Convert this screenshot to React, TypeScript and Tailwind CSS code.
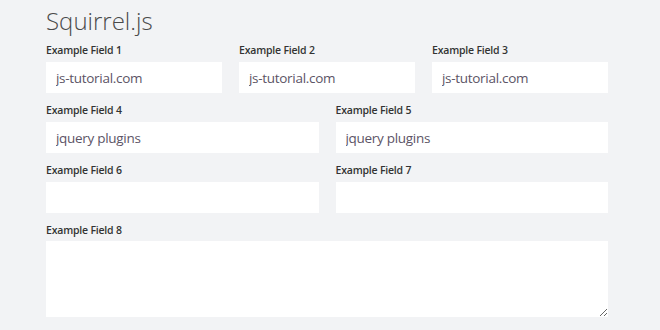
import React from "react";

const font = { fontFamily: '"Open Sans", "Liberation Sans", sans-serif' };

function Field({ label, value }: { label: string; value?: string }) {
  return (
    <div className="flex flex-col min-w-0">
      <label className="block text-[10.5px] tracking-[-0.2px] leading-[16px] font-semibold text-[#333] mb-[4px]">{label}</label>
      <div className="h-[31px] w-full bg-white pl-[10px] pr-[10px] flex items-center">
        <input
          readOnly
          defaultValue={value ?? ""}
          className="w-full h-full bg-transparent border-0 outline-none text-[13.5px] tracking-[-0.3px] font-normal text-[#5c5466]"
          style={font}
        />
      </div>
    </div>
  );
}

export default function App() {
  return (
    <div className="w-[660px] h-[330px] bg-[#f2f3f5] overflow-hidden" style={font}>
      <div className="w-[562px] ml-[46px] pt-[4px] flex flex-col">
        <h1 className="text-[24px] leading-[34px] font-light text-[#4a4a4a] mb-[4px]">Squirrel.js</h1>
        <div className="flex flex-col gap-[9px]">
          <div className="grid grid-cols-3 gap-x-[17px]">
            <Field label="Example Field 1" value="js-tutorial.com" />
            <Field label="Example Field 2" value="js-tutorial.com" />
            <Field label="Example Field 3" value="js-tutorial.com" />
          </div>
          <div className="grid grid-cols-2 gap-x-[17px]">
            <Field label="Example Field 4" value="jquery plugins" />
            <Field label="Example Field 5" value="jquery plugins" />
          </div>
          <div className="grid grid-cols-2 gap-x-[17px]">
            <Field label="Example Field 6" />
            <Field label="Example Field 7" />
          </div>
          <div className="flex flex-col">
            <label className="block text-[10.5px] tracking-[-0.2px] leading-[16px] font-semibold text-[#333] mb-[3px]">Example Field 8</label>
            <textarea
              className="h-[76px] w-full bg-white border-0 outline-none resize-y block text-[14px]"
              style={font}
            />
          </div>
        </div>
      </div>
    </div>
  );
}
